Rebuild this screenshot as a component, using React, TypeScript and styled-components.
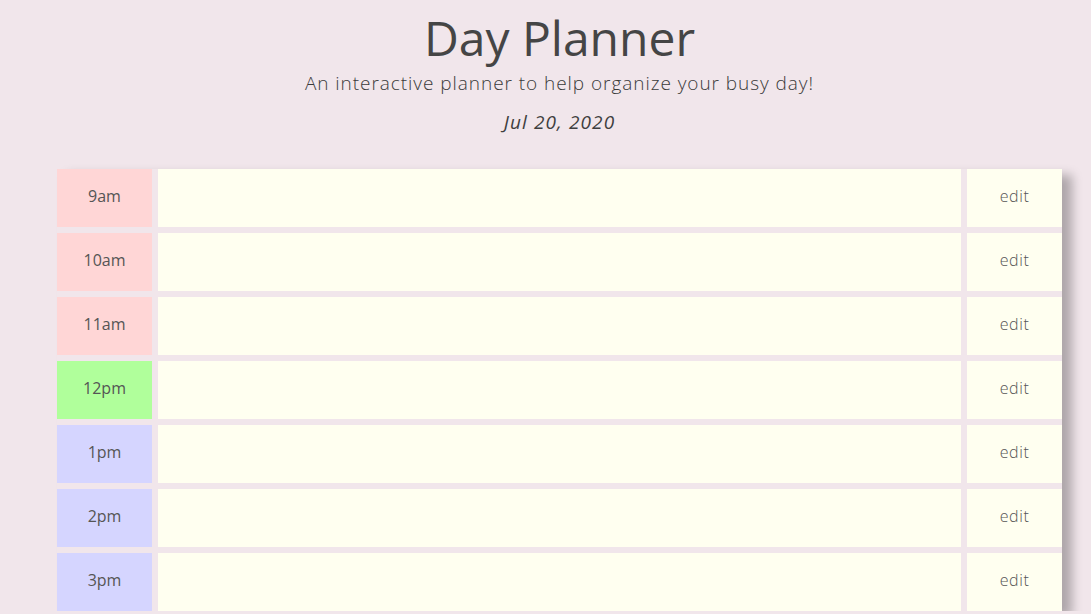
import React from "react";
import styled, { createGlobalStyle } from "styled-components";

const Global = createGlobalStyle`
  html, body { margin: 0; padding: 0; }
  body {
    background: #f1e6eb;
    font-family: "Open Sans", "Liberation Sans", sans-serif;
    color: #444;
    overflow: hidden;
  }
`;

const Page = styled.div`
  width: 1005px;
  margin-left: 57px;
`;

const Header = styled.header`
  display: flex;
  flex-direction: column;
  align-items: center;
  padding-top: 8px;
`;

const Title = styled.h1`
  margin: 0;
  font-size: 48px;
  font-weight: 400;
  line-height: 60px;
  color: #454545;
`;

const Lead = styled.p`
  margin: 0;
  font-size: 19px;
  font-weight: 300;
  line-height: 30px;
  letter-spacing: 0.95px;
  color: #3a3a3a;
`;

const DateText = styled.p`
  margin: 9px 0 0;
  font-size: 19px;
  font-style: italic;
  font-weight: 400;
  line-height: 30px;
  letter-spacing: 1.1px;
  color: #3f3f3f;
`;

const Planner = styled.div`
  margin-top: 32px;
  display: flex;
  flex-direction: column;
  gap: 6px;
  box-shadow: 10px 6px 10px rgba(0, 0, 0, 0.28);
`;

const Row = styled.div`
  display: grid;
  grid-template-columns: 95px 1fr 95px;
  column-gap: 6px;
  height: 58px;
`;

const Hour = styled.div<{ $state: "past" | "present" | "future" }>`
  display: flex;
  align-items: center;
  justify-content: center;
  padding-bottom: 4px;
  box-sizing: border-box;
  font-size: 16px;
  color: #555;
  background: ${(p) =>
    p.$state === "past" ? "#ffd6d6" : p.$state === "present" ? "#b0ff9b" : "#d5d5ff"};
`;

const Entry = styled.textarea`
  border: none;
  resize: none;
  margin: 0;
  padding: 8px;
  background: #fffff0;
  font-family: inherit;
  outline: none;
`;

const Edit = styled.button`
  border: none;
  margin: 0;
  padding: 0 0 4px;
  background: #fffff0;
  font-family: inherit;
  font-size: 16px;
  font-weight: 300;
  letter-spacing: 0.6px;
  color: #555;
  cursor: pointer;
`;

const hours: { label: string; state: "past" | "present" | "future" }[] = [
  { label: "9am", state: "past" },
  { label: "10am", state: "past" },
  { label: "11am", state: "past" },
  { label: "12pm", state: "present" },
  { label: "1pm", state: "future" },
  { label: "2pm", state: "future" },
  { label: "3pm", state: "future" },
];

export default function App() {
  return (
    <>
      <Global />
      <Page>
        <Header>
          <Title>Day Planner</Title>
          <Lead>An interactive planner to help organize your busy day!</Lead>
          <DateText>Jul 20, 2020</DateText>
        </Header>
        <Planner>
          {hours.map((h) => (
            <Row key={h.label}>
              <Hour $state={h.state}>{h.label}</Hour>
              <Entry />
              <Edit>edit</Edit>
            </Row>
          ))}
        </Planner>
      </Page>
    </>
  );
}
